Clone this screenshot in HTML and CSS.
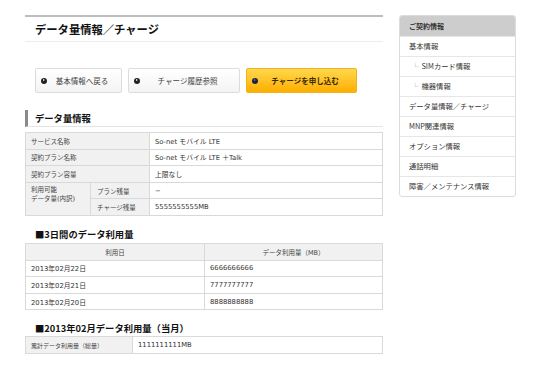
FILE: index.html
```html
<!DOCTYPE html>
<html lang="ja">

<head>
    <meta charset="UTF-8">
    <title>データ量情報／チャージ</title>
    <link rel="stylesheet" href="styles.css">
</head>

<body>
    <div class="page">
        <div class="main">
            <h1 class="pageTitle">データ量情報／チャージ</h1>

            <div class="btnRow">
                <a class="btn btnBack"><span class="dot"></span><span class="label">基本情報へ戻る</span></a>
                <a class="btn btnHistory"><span class="dot"></span><span class="label">チャージ履歴参照</span></a>
                <a class="btn btnCharge"><span class="dot"></span><span class="label">チャージを申し込む</span></a>
            </div>

            <h2 class="sectionTitle">データ量情報</h2>
            <table class="info">
                <colgroup>
                    <col class="c1">
                    <col class="c2">
                    <col>
                </colgroup>
                <tr>
                    <th colspan="2">サービス名称</th>
                    <td>So-net モバイル LTE</td>
                </tr>
                <tr>
                    <th colspan="2">契約プラン名称</th>
                    <td>So-net モバイル LTE ＋Talk</td>
                </tr>
                <tr>
                    <th colspan="2">契約プラン容量</th>
                    <td>上限なし</td>
                </tr>
                <tr>
                    <th rowspan="2" class="multi">利用可能<br>データ量(内訳)</th>
                    <th class="sub">プラン残量</th>
                    <td>−</td>
                </tr>
                <tr>
                    <th class="sub">チャージ残量</th>
                    <td>5555555555MB</td>
                </tr>
            </table>

            <h3 class="subTitle">■3日間のデータ利用量</h3>
            <table class="usage">
                <colgroup>
                    <col class="dateCol">
                    <col>
                </colgroup>
                <tr>
                    <th>利用日</th>
                    <th>データ利用量（MB）</th>
                </tr>
                <tr>
                    <td>2013年02月22日</td>
                    <td>6666666666</td>
                </tr>
                <tr>
                    <td>2013年02月21日</td>
                    <td>7777777777</td>
                </tr>
                <tr>
                    <td>2013年02月20日</td>
                    <td>8888888888</td>
                </tr>
            </table>

            <h3 class="subTitle">■2013年02月データ利用量（当月）</h3>
            <table class="month">
                <colgroup>
                    <col class="labelCol">
                    <col>
                </colgroup>
                <tr>
                    <th>累計データ利用量（総量）</th>
                    <td>1111111111MB</td>
                </tr>
            </table>
        </div>

        <div class="side">
            <div class="sideHead">ご契約情報</div>
            <ul class="sideMenu">
                <li>基本情報</li>
                <li class="child"><span class="mark">└</span>SIMカード情報</li>
                <li class="child"><span class="mark">└</span>機器情報</li>
                <li>データ量情報／チャージ</li>
                <li>MNP関連情報</li>
                <li>オプション情報</li>
                <li>通話明細</li>
                <li>障害／メンテナンス情報</li>
            </ul>
        </div>
    </div>
</body>

</html>
```

FILE: styles.css
```css
body {
    margin: 0;
    font-family: "Noto Sans CJK JP", "Noto Sans", sans-serif;
    color: #333;
    background: #fff;
}

.page {
    display: flex;
    gap: 16px;
    padding: 15px 0 0 25px;
}

.main {
    width: 358px;
}

.pageTitle {
    margin: 0;
    height: 24px;
    line-height: 24px;
    padding-left: 10px;
    border-top: 2px solid #bdbdbd;
    border-bottom: 1px solid #ececec;
    font-size: 11.3px;
    font-weight: bold;
    color: #111;
}

.btnRow {
    display: flex;
    gap: 6px;
    margin-top: 26px;
    padding-left: 10px;
}

.btn {
    display: flex;
    align-items: center;
    height: 25px;
    box-sizing: border-box;
    padding-left: 5px;
    border: 1px solid #dcdcdc;
    border-radius: 2px;
    background: linear-gradient(#ffffff, #f4f4f4);
    font-size: 7.5px;
    color: #444;
}

.btnBack {
    width: 87px;
}

.btnHistory {
    width: 112px;
}

.btnCharge {
    width: 111px;
    border-color: #f2b21c;
    background: linear-gradient(#ffd84e, #ffae00);
    font-weight: bold;
    color: #3a2a00;
}

.dot {
    position: relative;
    width: 6px;
    height: 6px;
    border-radius: 50%;
    background: #222;
    flex-shrink: 0;
}

.dot::after {
    content: "";
    position: absolute;
    left: 2px;
    top: 1.5px;
    border-left: 2.5px solid #fff;
    border-top: 1.5px solid transparent;
    border-bottom: 1.5px solid transparent;
}

.btnCharge .dot {
    background: #1d2240;
}

.btnCharge .dot::after {
    border-left-color: #4a7bd6;
}

.label {
    flex: 1;
    text-align: center;
    padding-right: 4px;
}

.sectionTitle {
    margin: 17px 0 0;
    height: 16px;
    line-height: 16px;
    padding-left: 7px;
    border-left: 3px solid #8a8a8a;
    border-bottom: 1px solid #e4e4e4;
    font-size: 9.3px;
    font-weight: bold;
    color: #111;
}

table {
    width: 100%;
    table-layout: fixed;
    border-collapse: collapse;
    font-family: "DejaVu Sans", "Noto Sans CJK JP", sans-serif;
    font-size: 6.5px;
}

th,
td {
    border: 1px solid #d9d9d9;
    padding: 0 5px;
    height: 15.6px;
    text-align: left;
    font-weight: normal;
    vertical-align: middle;
    white-space: nowrap;
}

th {
    background-color: #f1f1f1;
    color: #444;
}

.info {
    margin-top: 5px;
}

.info .c1 {
    width: 65px;
}

.info .c2 {
    width: 59px;
}

.info th.multi {
    vertical-align: top;
    padding-top: 3px;
    line-height: 9px;
}

.info th.sub {
    padding-left: 6px;
}

.info td {
    font-size: 6.8px;
}

.subTitle {
    margin: 10px 0 0;
    height: 17px;
    line-height: 17px;
    padding-left: 10px;
    font-size: 9.3px;
    font-weight: bold;
    color: #111;
}

.usage th {
    text-align: center;
}

.usage .dateCol {
    width: 179px;
}

.usage td {
    font-size: 6.8px;
}

.month {
    margin-top: -1px;
}

.month .labelCol {
    width: 107px;
}

.month th {
    height: 16px;
    font-size: 6px;
}

.month td {
    font-size: 6.8px;
}

.side {
    width: 115px;
    align-self: flex-start;
    border: 1px solid #dcdcdc;
    border-radius: 3px;
    overflow: hidden;
}

.sideHead {
    height: 20px;
    line-height: 20px;
    padding-left: 9px;
    background: #cdcdcd;
    font-size: 7px;
    font-weight: bold;
    color: #333;
}

.sideMenu {
    list-style: none;
    margin: 0;
    padding: 0;
}

.sideMenu li {
    height: 19px;
    line-height: 19px;
    padding-left: 9px;
    border-top: 1px solid #e6e6e6;
    font-size: 7.3px;
    color: #333;
}

.sideMenu li.child {
    padding-left: 12px;
}

.mark {
    color: #999;
    margin-right: 3px;
    font-size: 6.5px;
}
```
